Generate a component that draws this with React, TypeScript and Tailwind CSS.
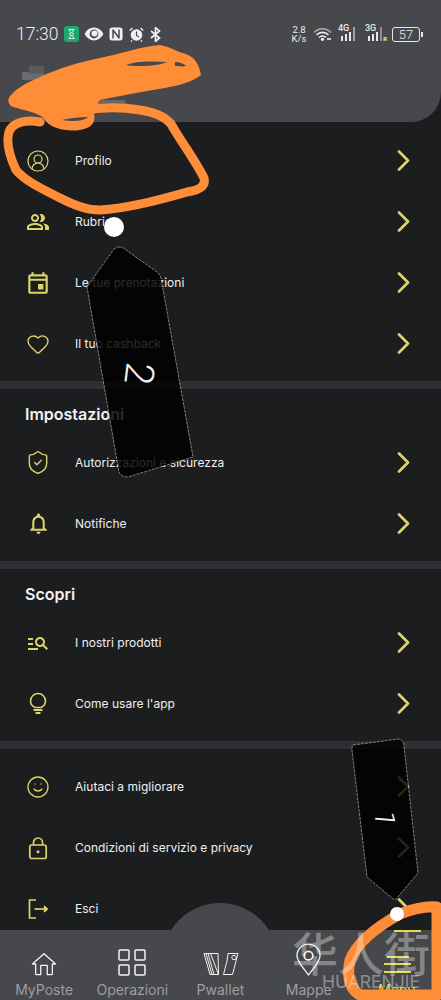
import type { ReactNode } from "react";
import { CircleUserRound, Heart, ShieldCheck, Smile } from "lucide-react";
import {
  MdOutlineEvent,
  MdOutlineManageSearch,
  MdOutlineNotifications,
  MdOutlinePeopleAlt,
} from "react-icons/md";

const YELLOW = "#dbd36b";

function Chevron() {
  return (
    <svg width="13" height="21" viewBox="0 0 13 21" fill="none" stroke={YELLOW} strokeWidth="2.700" strokeLinecap="round" strokeLinejoin="round">
      <path d="M2 1.500L11 10.500L2 19.500" />
    </svg>
  );
}

function BulbIcon() {
  return (
    <svg width="20" height="23" viewBox="0 0 20 23" fill="none" stroke={YELLOW} strokeWidth="1.600">
      <path d="M7 15.500C4 14 2.500 11.500 2.500 9a7.500 7.500 0 0 1 15 0c0 2.500-1.500 5-4.500 6.500Z" />
      <path d="M5.500 18h9" strokeWidth="2" />
      <path d="M7.500 21h5" strokeWidth="2" />
    </svg>
  );
}

function LockIcon() {
  return (
    <svg width="22" height="24" viewBox="0 0 22 24" fill="none" stroke={YELLOW} strokeWidth="1.700">
      <rect x="2.800" y="9" width="16.400" height="13.500" rx="2" />
      <path d="M6.500 9V6.500a4.500 4.500 0 0 1 9 0V9" />
      <circle cx="11" cy="15.800" r="1.500" fill={YELLOW} stroke="none" />
    </svg>
  );
}

function LogoutIcon() {
  return (
    <svg width="22" height="22" viewBox="0 0 22 22" fill="none" stroke={YELLOW} strokeWidth="1.700">
      <path d="M9 2H2.500v18H9" />
      <path d="M7.500 11h12" />
      <path d="M17 8l3.200 3-3.200 3" fill={YELLOW} />
    </svg>
  );
}

function Row({ icon, label }: { icon: ReactNode; label: string }) {
  return (
    <div className="flex h-[61px] items-center pl-[25px] pr-[31px]">
      <div className="flex w-[26px] items-center justify-center">{icon}</div>
      <span className="ml-[24px] flex-1 pt-[1px] text-[12px] tracking-[0.02px] text-[#f0f0f0]">{label}</span>
      <Chevron />
    </div>
  );
}

function SectionTitle({ children }: { children: ReactNode }) {
  return (
    <h2 className="flex h-[43px] items-center pl-[25px] pt-[7px] text-[16px] font-semibold leading-none text-[#f2f2f2]">
      {children}
    </h2>
  );
}

function Divider() {
  return <div className="h-[8px] bg-[#2f3034]" />;
}

function Signal({ tag, roaming }: { tag: string; roaming?: boolean }) {
  return (
    <div className="relative h-[16px] w-[22px]">
      <span className="absolute left-0 top-[-2px] font-['Roboto'] text-[9px] font-medium leading-[9px] text-[#e8e8e8]">
        {tag}
      </span>
      <svg width="22" height="16" viewBox="0 0 22 16" fill="#e8e8e8" className="absolute left-0 top-0">
        <rect x="3" y="10" width="2" height="5" />
        <rect x="7" y="8" width="2" height="7" />
        <rect x="11" y="6" width="2" height="9" />
        <rect x="15" y="1" width="2" height="14" opacity={roaming ? 0.45 : 0.55} />
      </svg>
      {roaming ? (
        <span className="absolute bottom-0 right-0 font-['Roboto'] text-[6px] font-bold leading-[6px] text-[#e8e8e8]">R</span>
      ) : null}
    </div>
  );
}

function StatusBar() {
  return (
    <div className="flex items-center justify-between pl-[16px] pr-[18px] pt-[24px]">
      <div className="flex items-center">
        <span className="font-['Roboto'] text-[17.500px] font-light leading-[20px] text-[#eeeeee]">17:30</span>
        <div className="ml-[5px] flex h-[16px] w-[15px] items-center justify-center rounded-[3px] bg-[#1fa96c]">
          <svg width="7" height="10" viewBox="0 0 7 10" fill="none" stroke="#d5f3e4" strokeWidth="1">
            <path d="M0.500 0.500h6M0.500 9.500h6M1.200 0.500c0 3 4.600 3.600 4.600 4.500S1.200 6.500 1.200 9.500M5.800 0.500c0 3-4.600 3.600-4.600 4.500s4.600 1.500 4.600 4.500" />
          </svg>
        </div>
        <svg width="20" height="14" viewBox="0 0 20 14" className="ml-[5px]">
          <path d="M0.500 7C3 2.600 6.200 0.600 10 0.600S17 2.600 19.500 7C17 11.400 13.800 13.400 10 13.400S3 11.400 0.500 7Z" fill="#f0f0f0" />
          <circle cx="10" cy="7" r="4.400" fill="#47484c" />
          <circle cx="10.500" cy="6.500" r="3" fill="#f0f0f0" />
        </svg>
        <svg width="14" height="14" viewBox="0 0 14 14" className="ml-[5px]">
          <rect x="0.500" y="0.500" width="13" height="13" rx="2.500" fill="#f0f0f0" />
          <path d="M4 2.500v9M10 2.500v9M4 3l6 8" fill="none" stroke="#47484c" strokeWidth="1.500" />
        </svg>
        <svg width="15" height="15" viewBox="0 0 15 15" className="ml-[6px]">
          <circle cx="7.500" cy="8" r="5.800" fill="#f0f0f0" />
          <path d="M7.500 4.500V8.500L10 10" fill="none" stroke="#47484c" strokeWidth="1.200" />
          <path d="M0.800 3.500L3.500 1M14.200 3.500L11.500 1M3.200 13.500L2 14.500M11.800 13.500L13 14.500" stroke="#f0f0f0" strokeWidth="1.400" />
        </svg>
        <svg width="11" height="15" viewBox="0 0 11 15" fill="none" stroke="#f0f0f0" strokeWidth="1.700" className="ml-[6px]">
          <path d="M1 4l8.500 7-4 3.300V0.700l4 3.300L1 11" />
        </svg>
      </div>
      <div className="flex items-center">
        <div className="w-[16px] text-center font-['Roboto'] text-[9.500px] leading-[9px] text-[#eeeeee]">
          <div>2.8</div>
          <div>K/s</div>
        </div>
        <svg width="19" height="14" viewBox="0 0 19 14" fill="none" className="ml-[6px]">
          <path d="M1 5.500C6 0.500 13 0.500 18 5.500" stroke="#a9aaac" strokeWidth="1.600" />
          <path d="M3.500 8C7 4.500 12 4.500 15.500 8" stroke="#f0f0f0" strokeWidth="1.600" />
          <path d="M6 10.500C8 8.700 11 8.700 13 10.500" stroke="#f0f0f0" strokeWidth="1.600" />
          <circle cx="9.500" cy="12.300" r="1.600" fill="#f0f0f0" />
          <rect x="14" y="11" width="4" height="2" fill="#cfcfcf" />
        </svg>
        <div className="ml-[6px]">
          <Signal tag="4G" />
        </div>
        <div className="ml-[5px]">
          <Signal tag="3G" roaming />
        </div>
        <div className="ml-[5px] flex items-center">
          <div className="flex h-[15px] w-[28px] items-center justify-center rounded-[3px] border border-[#e8e8e8] font-['Roboto'] text-[13px] font-light leading-none text-[#eeeeee]">
            57
          </div>
          <div className="ml-[1px] h-[5px] w-[2px] bg-[#e8e8e8]" />
        </div>
      </div>
    </div>
  );
}

function NavItem({ icon, label, active }: { icon: ReactNode; label: string; active?: boolean }) {
  return (
    <div className="relative flex flex-1 flex-col items-center">
      {active ? <div className="absolute left-[41px] top-0 h-[2px] w-[27px] bg-[#e3dc4f]" /> : null}
      <div className="flex h-[46px] items-end justify-center">{icon}</div>
      <span className={`mt-[5px] whitespace-nowrap text-[14px] leading-[17px] ${active ? "text-[#e3dc4f]" : "text-[#9d9ea1]"}`}>
        {label}
      </span>
    </div>
  );
}

function HomeIcon() {
  return (
    <svg width="26" height="24" viewBox="0 0 28 24" fill="none" stroke="#f2f2f2" strokeWidth="1.400" strokeLinejoin="round">
      <path d="M1.500 12L14 1l12.500 11H23v10.500a1 1 0 0 1-1 1h-4.500V13.500h-7V23.500H6a1 1 0 0 1-1-1V12Z" />
    </svg>
  );
}

function GridIcon() {
  return (
    <svg width="28" height="27" viewBox="0 0 28 27" fill="none" stroke="#f2f2f2" strokeWidth="1.500">
      <rect x="1" y="1" width="10" height="10" rx="1" />
      <rect x="17" y="1" width="10" height="10" rx="1" />
      <rect x="1" y="16" width="10" height="10" rx="1" />
      <rect x="17" y="16" width="10" height="10" rx="1" />
    </svg>
  );
}

function WalletIcon() {
  return (
    <svg width="36" height="24" viewBox="0 0 36 24" fill="none" stroke="#f2f2f2" strokeWidth="1" strokeLinejoin="round">
      <path d="M1 1.500H15L15.500 22.500H7Z" />
      <path d="M3 1.500L9 22.500" />
      <path d="M5 1.500L11 22.500" />
      <path d="M7.500 1.500L15.500 22.500" />
      <path d="M25 1.500H35L29.500 22.500H20.500L24 9Z" />
      <circle cx="31" cy="5.500" r="2.200" />
    </svg>
  );
}

function PinIcon() {
  return (
    <svg width="25" height="33" viewBox="0 0 26 34" fill="none" stroke="#f2f2f2" strokeWidth="1.400">
      <path d="M13 33C7 25 1 19 1 13a12 12 0 0 1 24 0c0 6-6 12-12 20Z" />
      <circle cx="13" cy="13" r="4.500" strokeWidth="1.800" />
    </svg>
  );
}

function MenuIcon() {
  return (
    <svg width="28" height="22" viewBox="0 0 28 22" stroke="#e3dc4f" strokeWidth="1.800">
      <path d="M4 3h22M1 10h27M1 18h27" />
    </svg>
  );
}

function BottomNav() {
  return (
    <div className="absolute bottom-0 left-0 right-0 h-[70px] bg-[#47484c]">
      <div className="absolute left-[162px] top-[-27px] h-[116px] w-[116px] rounded-full bg-[#47484c]" />
      <div className="relative flex">
        <NavItem icon={<HomeIcon />} label="MyPoste" />
        <NavItem icon={<GridIcon />} label="Operazioni" />
        <NavItem icon={<WalletIcon />} label="Pwallet" />
        <NavItem icon={<PinIcon />} label="Mappe" />
        <NavItem icon={<MenuIcon />} label="Menu" active />
      </div>
    </div>
  );
}

// hand drawn marks that were put on top of the screenshot
function Annotations() {
  return (
    <svg width="441" height="1000" viewBox="0 0 441 1000" className="pointer-events-none absolute left-0 top-0">
      <rect x="22" y="72" width="22" height="8" fill="#6a6b6f" />
      <rect x="29" y="66" width="15" height="8" fill="#5a5b5f" />
      <rect x="85" y="100" width="40" height="8" fill="#66676b" />
      <path
        d="M160 45C172 47 176 52 186 54C196 58 199 65 201 75C192 82 180 85 165 88C140 92 120 96 100 100C96 104 98 110 94 114C96 122 92 128 80 130C66 132 50 128 45 120C40 112 20 110 11 106C7 102 8 98 11 95C20 85 30 82 42 76C60 68 80 62 100 58C120 54 142 46 160 45Z"
        fill="#ff8c37"
      />
      <path d="M126 65C135 61 150 61 167 62C158 66 138 67 126 65Z" fill="#47484c" />
      <path d="M175 62C180 62 184 64 186 66C182 67 178 66 175 66Z" fill="#47484c" />
      <path d="M62 120C70 118 80 117 88 117C84 121 72 122 62 120Z" fill="#47484c" />
      <path
        d="M80 111C100 107 122 107 140 110C155 112 165 117 171 124C180 140 195 160 204 178C206 186 200 190 187 192C160 200 130 208 100 210C85 210 72 204 60 198C40 188 24 180 16 170C9 155 6 142 9 132C12 123 25 119 40 122"
        fill="none"
        stroke="#ff8c37"
        strokeWidth="9"
        strokeLinecap="round"
        strokeLinejoin="round"
      />
      <path
        d="M400 914C380 925 358 940 350 960C347 975 348 988 360 995H437V907C425 906 410 910 400 914Z"
        fill="none"
        stroke="#ff8c37"
        strokeWidth="11"
        strokeLinejoin="round"
      />
      <path
        d="M118 247C122 247 124 248 126 250L157 272C159 274 160 275 161 278L193 457L128 477C123 477 120 475 119 472L87 287L114 249Z"
        fill="#000"
        fillOpacity="0.83"
        stroke="#c8c8c8"
        strokeWidth="0.600"
        strokeDasharray="3 1"
      />
      <path
        d="M353 745L398 739C402 739 404 742 404 746L418 873L397 898C396 900 394 900 392 898L367 877L352 750C352 747 352 746 353 745Z"
        fill="#000"
        fillOpacity="0.83"
        stroke="#c8c8c8"
        strokeWidth="0.600"
        strokeDasharray="3 1"
      />
      <text
        x="0"
        y="0"
        transform="translate(127 361) rotate(97)"
        fontFamily="Roboto, sans-serif"
        fontWeight="300"
        fontSize="40"
        fill="#f4f4f4"
      >
        2
      </text>
      <text
        x="0"
        y="0"
        transform="translate(376 810) rotate(95)"
        fontFamily="Roboto, sans-serif"
        fontWeight="300"
        fontSize="28"
        fill="#f4f4f4"
      >
        1
      </text>
      <circle cx="114" cy="227" r="10" fill="#fff" />
      <circle cx="397" cy="914" r="7" fill="#fff" />
    </svg>
  );
}

function Watermark() {
  return (
    <div className="pointer-events-none absolute left-[292px] top-[926px] w-[140px]">
      <div className="font-['Noto_Sans_CJK_SC',sans-serif] text-[46px] font-medium leading-[50px] text-white/35">华人街</div>
      <div className="ml-[30px] mt-[-2px] text-[17.500px] leading-[16px] text-white/40">HUARENJIE</div>
    </div>
  );
}

export default function App() {
  return (
    <div className="relative h-[1000px] w-[441px] overflow-hidden bg-[#1c1d1f] font-['Inter',sans-serif]">
      <header className="h-[122px] rounded-br-[30px] bg-[#47484c]">
        <StatusBar />
      </header>

      <section className="pb-[7px] pt-[8px]">
        <Row icon={<CircleUserRound size={24} strokeWidth={1.200} color={YELLOW} />} label="Profilo" />
        <Row icon={<MdOutlinePeopleAlt size={24} color={YELLOW} />} label="Rubrica" />
        <Row icon={<MdOutlineEvent size={26} color={YELLOW} />} label="Le tue prenotazioni" />
        <Row icon={<Heart size={24} strokeWidth={1.400} color={YELLOW} />} label="Il tuo cashback" />
      </section>
      <Divider />

      <section className="pb-[7px]">
        <SectionTitle>Impostazioni</SectionTitle>
        <Row icon={<ShieldCheck size={27} strokeWidth={1.300} color={YELLOW} />} label="Autorizzazioni e sicurezza" />
        <Row icon={<MdOutlineNotifications size={25} color={YELLOW} />} label="Notifiche" />
      </section>
      <Divider />

      <section className="pb-[7px]">
        <SectionTitle>Scopri</SectionTitle>
        <Row icon={<MdOutlineManageSearch size={24} color={YELLOW} />} label="I nostri prodotti" />
        <Row icon={<BulbIcon />} label="Come usare l'app" />
      </section>
      <Divider />

      <section className="pt-[7px]">
        <Row icon={<Smile size={24} strokeWidth={1.300} color={YELLOW} />} label="Aiutaci a migliorare" />
        <Row icon={<LockIcon />} label="Condizioni di servizio e privacy" />
        <Row icon={<LogoutIcon />} label="Esci" />
      </section>

      <BottomNav />
      <Annotations />
      <Watermark />
    </div>
  );
}
